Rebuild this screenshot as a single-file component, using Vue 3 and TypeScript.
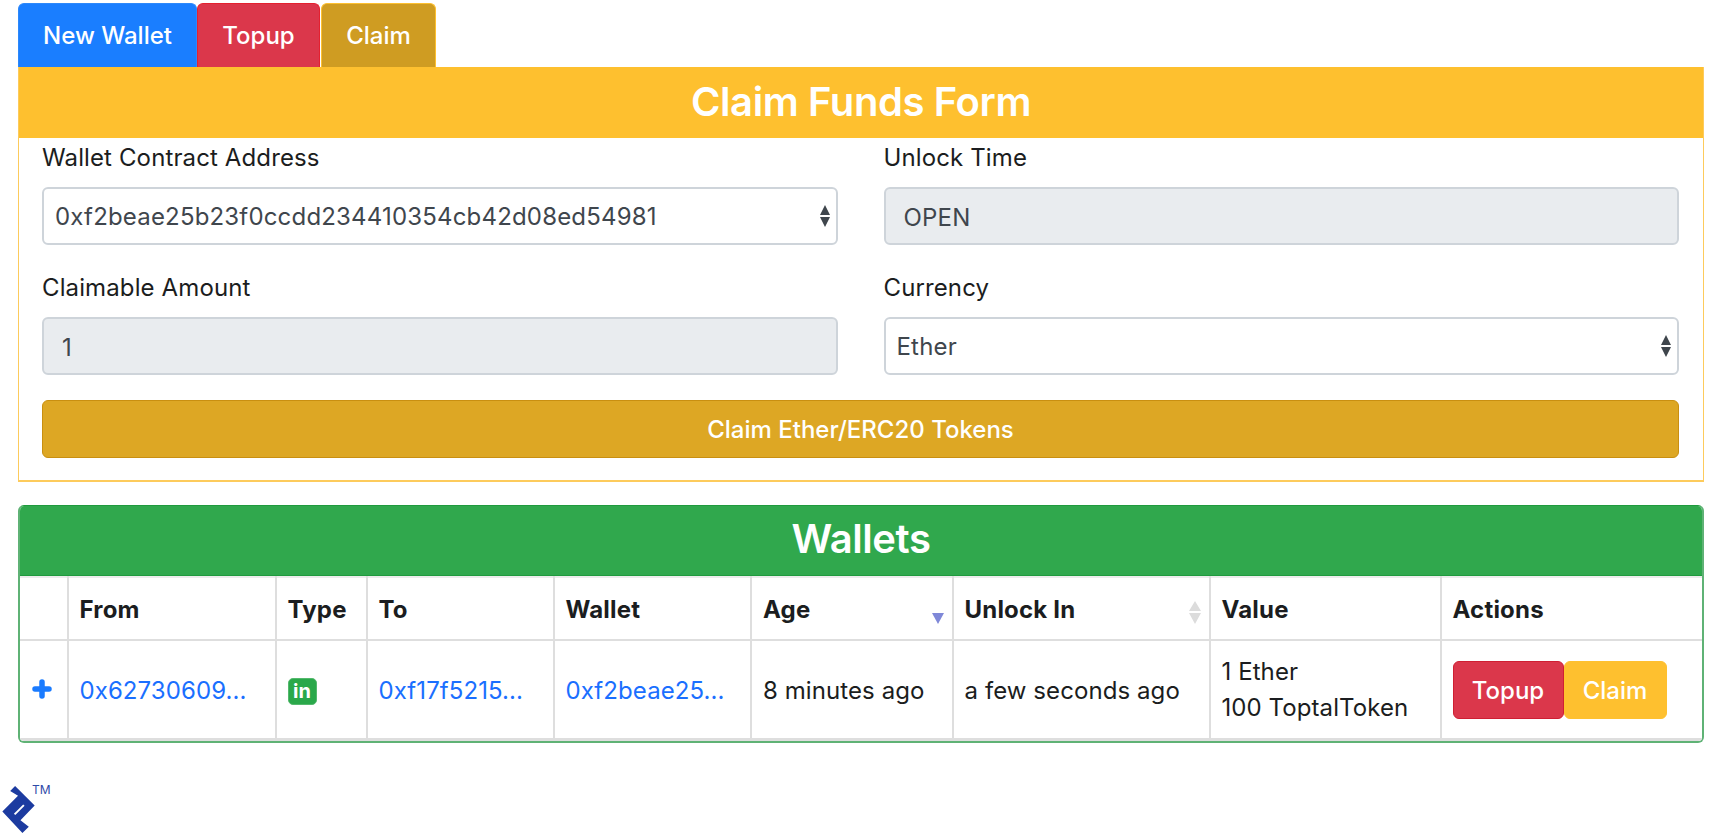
<script setup lang="ts">
const tabs = [
  { label: 'New Wallet', cls: 'tab-blue' },
  { label: 'Topup', cls: 'tab-red' },
  { label: 'Claim', cls: 'tab-gold' },
]
const cols = [
  { label: '', sort: '' },
  { label: 'From', sort: '' },
  { label: 'Type', sort: '' },
  { label: 'To', sort: '' },
  { label: 'Wallet', sort: '' },
  { label: 'Age', sort: 'desc' },
  { label: 'Unlock In', sort: 'both' },
  { label: 'Value', sort: '' },
  { label: 'Actions', sort: '' },
]
</script>

<template>
  <div class="page">
    <main class="content">
      <nav class="tabs">
        <button v-for="t in tabs" :key="t.label" class="tab" :class="t.cls">{{ t.label }}</button>
      </nav>

      <section class="card card-form">
        <h2 class="card-head head-yellow">Claim Funds Form</h2>
        <form class="form" @submit.prevent>
          <div class="field">
            <label class="label">Wallet Contract Address</label>
            <div class="select-wrap">
              <select class="control select">
                <option>0xf2beae25b23f0ccdd234410354cb42d08ed54981</option>
              </select>
              <svg class="updown" viewBox="0 0 10 22" width="10" height="22" aria-hidden="true">
                <path d="M5 0 L10 10 L0 10 Z M0 12 L10 12 L5 22 Z" fill="#3f464d" />
              </svg>
            </div>
          </div>
          <div class="field">
            <label class="label">Unlock Time</label>
            <input class="control readonly" value="OPEN" readonly />
          </div>
          <div class="field">
            <label class="label">Claimable Amount</label>
            <input class="control readonly" value="1" readonly />
          </div>
          <div class="field">
            <label class="label">Currency</label>
            <div class="select-wrap">
              <select class="control select">
                <option>Ether</option>
              </select>
              <svg class="updown" viewBox="0 0 10 22" width="10" height="22" aria-hidden="true">
                <path d="M5 0 L10 10 L0 10 Z M0 12 L10 12 L5 22 Z" fill="#3f464d" />
              </svg>
            </div>
          </div>
          <button class="submit" type="button">Claim Ether/ERC20 Tokens</button>
        </form>
      </section>

      <section class="card card-table">
        <h2 class="card-head head-green">Wallets</h2>
        <table class="table">
          <colgroup>
            <col class="c0" /><col class="c1" /><col class="c2" /><col class="c3" /><col class="c4" />
            <col class="c5" /><col class="c6" /><col class="c7" /><col class="c8" />
          </colgroup>
          <thead>
            <tr>
              <th v-for="c in cols" :key="c.label" :class="{ sortable: c.sort }">
                {{ c.label }}
                <svg v-if="c.sort === 'desc'" class="sort" viewBox="0 0 12 23" width="12" height="23" aria-hidden="true">
                  <path d="M0 12 L12 12 L6 23 Z" fill="#7f88d8" />
                </svg>
                <svg v-if="c.sort === 'both'" class="sort" viewBox="0 0 12 23" width="12" height="23" aria-hidden="true">
                  <path d="M6 0 L12 10 L0 10 Z M0 12 L12 12 L6 23 Z" fill="#dcdcdc" />
                </svg>
              </th>
            </tr>
          </thead>
          <tbody>
            <tr>
              <td class="expand">
                <svg viewBox="0 0 20 20" width="20" height="20" aria-hidden="true">
                  <path d="M10 3 V17 M3 10 H17" stroke="#1a7bff" stroke-width="5.5" stroke-linecap="round" fill="none" />
                </svg>
              </td>
              <td><a class="link" href="#">0x62730609...</a></td>
              <td><span class="badge-in">in</span></td>
              <td><a class="link" href="#">0xf17f5215...</a></td>
              <td><a class="link" href="#">0xf2beae25...</a></td>
              <td>8 minutes ago</td>
              <td>a few seconds ago</td>
              <td class="value">1 Ether<br />100 ToptalToken</td>
              <td class="actions">
                <div class="action-row">
                  <button class="act act-red">Topup</button>
                  <button class="act act-yellow">Claim</button>
                </div>
              </td>
            </tr>
          </tbody>
        </table>
      </section>
    </main>

    <footer class="logo">
      <svg viewBox="0 0 34 48" width="34" height="47" aria-hidden="true">
        <path d="M13 0 L33 20 L18.5 35 L27 41.5 L20.5 48 L0 26 L16 10 L8 5 Z" fill="#1c3ba0" />
        <path d="M12.5 29 L22 19.5" stroke="#fff" stroke-width="2" fill="none" />
      </svg>
      <span class="tm">TM</span>
    </footer>
  </div>
</template>

<style scoped>
.page {
  font-family: Inter, "Liberation Sans", sans-serif;
  font-size: 24px;
  line-height: 36px;
  letter-spacing: 0.12px;
  color: #1b1d20;
  background: #fff;
  height: 833px;
  overflow: hidden;
}
.content {
  padding: 3px 17px 0 18px;
}
.tabs {
  display: flex;
  height: 64px;
}
.tab {
  font: inherit;
  font-size: 24px;
  font-weight: 500;
  letter-spacing: 0;
  color: #fff;
  border: 1px solid transparent;
  border-bottom: 0;
  border-radius: 6px 6px 0 0;
  padding: 0;
  cursor: pointer;
}
.tab-blue { width: 179px; background: #1a7eff; border-color: #2d88fa; }
.tab-red { width: 123px; background: #db374b; border-color: #e5202f; }
.tab-gold { width: 115px; margin-left: 1px; background: #cf9c22; border-color: #fec02f; }

.card {
  border-style: solid;
  overflow: hidden;
}
.card-form {
  border-width: 0 1px 2px;
  border-color: #fdcb5c;
}
.card-table {
  margin-top: 23px;
  border-width: 1px 2px 2px;
  border-color: #1f9a3d #5fb275 #5fb275;
  border-radius: 6px;
}
.card-head {
  margin: 0;
  text-align: center;
  color: #fff;
  font-size: 40px;
  font-weight: 600;
  letter-spacing: -0.4px;
}
.head-yellow { background: #fec02f; height: 71px; line-height: 70px; }
.head-green { background: #30a84d; height: 70px; line-height: 66px; box-sizing: border-box; border-bottom: 1px solid #1f9a3d; }

.form {
  display: grid;
  grid-template-columns: 1fr 1fr;
  column-gap: 46px;
  row-gap: 25px;
  padding: 2px 24px 22px 23px;
}
.field {
  min-width: 0;
}
.label {
  display: block;
  margin-bottom: 11px;
}
.select-wrap {
  position: relative;
}
.control {
  display: block;
  width: 100%;
  box-sizing: border-box;
  height: 58px;
  font: inherit;
  font-size: 24px;
  letter-spacing: 0.18px;
  color: #3f464d;
  border: 2px solid #ced4da;
  border-radius: 6px;
  outline: none;
}
.select {
  appearance: none;
  background: #fff;
  padding: 2px 30px 0 11px;
}
.readonly {
  background: #e9ecef;
  padding: 2px 18px 0;
}
.updown {
  position: absolute;
  right: 8px;
  top: 18px;
}
.submit {
  grid-column: 1 / -1;
  height: 58px;
  font: inherit;
  font-size: 24px;
  font-weight: 500;
  letter-spacing: 0;
  color: #fff;
  background: #dda724;
  border: 1px solid #c98f10;
  border-radius: 6px;
  padding: 2px 0 0;
}

.table {
  width: 100%;
  table-layout: fixed;
  border-collapse: collapse;
  background: #fff;
}
.c0 { width: 47.5px; }
.c1 { width: 208px; }
.c2 { width: 91px; }
.c3 { width: 187px; }
.c4 { width: 197.5px; }
.c5 { width: 201.5px; }
.c6 { width: 257px; }
.c7 { width: 231px; }
th, td {
  border: 2px solid #dedede;
  padding: 2px 12px 0 11px;
  text-align: left;
  white-space: nowrap;
}
tr > :first-child { border-left: 0; }
tr > :last-child { border-right: 0; }
thead tr > * { border-top: 2px solid #ececec; }
tbody tr > * { border-bottom: 3px solid #dedede; }
th {
  height: 59px;
  padding-top: 2px;
  font-weight: 700;
  letter-spacing: 0.2px;
  position: relative;
}
td {
  height: 95px;
  letter-spacing: 0.08px;
  vertical-align: middle;
}
.sort {
  position: absolute;
  right: 8px;
  top: 23px;
}
.expand {
  padding: 0 0 0 12px;
}
.expand svg {
  display: block;
  margin-top: -2px;
}
.link {
  color: #1a6fff;
  text-decoration: none;
}
.badge-in {
  display: inline-block;
  width: 29px;
  height: 27px;
  border-radius: 5px;
  background: #2aa84a;
  border: 1px solid #54b96d;
  box-sizing: border-box;
  color: #fff;
  font-size: 20px;
  font-weight: 700;
  line-height: 24px;
  text-align: center;
  vertical-align: middle;
}
.value {
  padding-top: 1px;
}
.actions {
  padding-top: 0;
}
.action-row {
  display: flex;
}
.act {
  height: 58px;
  font: inherit;
  font-size: 24px;
  font-weight: 500;
  letter-spacing: 0;
  color: #fff;
  border-radius: 6px;
  padding: 2px 0 0;
  border: 1px solid transparent;
}
.act-red { width: 111px; background: #db374b; border-color: #cf1f33; }
.act-yellow { width: 103px; background: #fec02f; border-color: #fec02f; }

.logo {
  position: relative;
  margin-top: 43px;
  padding-left: 2px;
  height: 47px;
}
.logo svg {
  display: block;
}
.tm {
  position: absolute;
  left: 32px;
  top: -4px;
  font-size: 12px;
  line-height: 16px;
  letter-spacing: 0;
  color: #2f4aa8;
}
</style>
